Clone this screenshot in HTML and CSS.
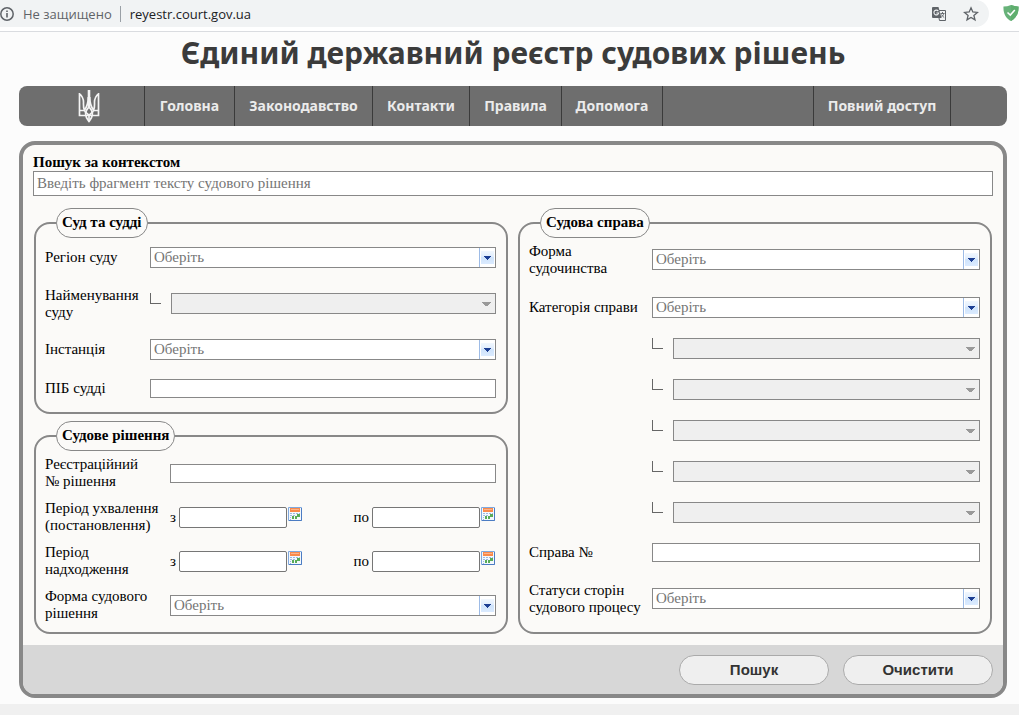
FILE: index.html
```html
<!DOCTYPE html>
<html lang="uk">
<head>
<meta charset="utf-8">
<title>Єдиний державний реєстр судових рішень</title>
<link rel="stylesheet" href="styles.css">
</head>
<body>
<svg width="0" height="0" class="defs" aria-hidden="true">
  <defs>
    <linearGradient id="btn" x1="0" y1="0" x2="0" y2="1"><stop offset="0" stop-color="#f1f7fe"/><stop offset=".45" stop-color="#e0edfd"/><stop offset=".5" stop-color="#cfe3fb"/><stop offset="1" stop-color="#dbebff"/></linearGradient>
    <symbol id="arrow" viewBox="0 0 17 19"><path d="M1.500 0v19" stroke="#9dbbe6"/><path d="M3 3h13v13H3z" fill="url(#btn)"/><path d="M6 8h7v1h-1v1h-1v1h-1v1H9v-1H8v-1H7V9H6z" fill="#1d3f94"/></symbol>
    <symbol id="arrow-off" viewBox="0 0 17 19"><path d="M4 8h9v1h-1v1h-1v1h-1v1H7v-1H6v-1H5V9H4z" fill="#999"/></symbol>
    <symbol id="calendar" viewBox="0 0 14 14"><path d="M.5.5h13v13H.5z" fill="#f3f8fd" stroke="#7fa8de"/><path d="M13.500 1v12.500H1" fill="none" stroke="#4c7cc3"/><path d="M2 1h10v4H2z" fill="#f98a4b"/><path d="M3 2h8v1H3z" fill="#fdb48a"/><path d="M2 6h2v1H2zm3 0h2v1H5zm3 0h2v1H8zm3 0h1v1h-1zM2 8h2v1H2zm3 0h2v1H5zM2 10h1v1H2zM2 12h1v1H2z" fill="#9db8e0"/><path d="M9 7h3v3H9zM4 9h2v3H4zM7 9h2v3H7z" fill="#58ab57"/></symbol>
  </defs>
</svg>

<header class="browser">
  <div class="omnibox">
    <svg class="info" viewBox="0 0 14 14"><circle cx="7" cy="7" r="6.200" fill="none" stroke="#5f6368" stroke-width="1.500"/><path d="M7 6v4.500M7 3.400v1.600" stroke="#5f6368" stroke-width="1.600"/></svg>
    <span class="insecure">Не защищено</span>
    <span class="url">reyestr.court.gov.ua</span>
    <svg class="translate" viewBox="0 0 16 16"><path d="M6.500 4.500h8v10h-6z" fill="#f1f3f4" stroke="#5f6368"/><path d="M2 1h5.500l3 11H2a1 1 0 0 1-1-1V2a1 1 0 0 1 1-1z" fill="#5f6368"/><path d="M7.300 5.100A2.400 2.400 0 1 0 7.700 7H5.400" fill="none" stroke="#f1f3f4" stroke-width="1.100"/><path d="M9.500 7.500h4M11.500 6v1.500M12.800 7.500c-.4 1.700-1.300 2.700-2.500 3.500M10.500 8.500c.5 1.300 1.500 2.200 2.700 3" fill="none" stroke="#5f6368" stroke-width=".9"/></svg>
    <svg class="star" viewBox="0 0 16 16"><path d="M8 1.800l1.800 4.200 4.600.4-3.500 3 1.100 4.500L8 11.500l-4 2.400 1.100-4.500-3.500-3L6.200 6z" fill="none" stroke="#5f6368" stroke-width="1.300"/></svg>
  </div>
  <svg class="shield" viewBox="0 0 16 16"><path d="M8 0c2.500 1 5 1.500 7.500 1.500C16 9 12.500 13.500 8 16 3.500 13.500 0 9 .5 1.500 3 1.500 5.500 1 8 0z" fill="#67b279"/><path d="M8 0c2.500 1 5 1.500 7.500 1.500C16 9 12.500 13.500 8 16z" fill="#5fae6e"/><path d="M4.500 7.500L7.300 10l4.500-5" fill="none" stroke="#fff" stroke-width="1.600"/></svg>
</header>

<main class="page">
  <h1 class="title">Єдиний державний реєстр судових рішень</h1>
  <nav class="menu">
    <span class="cell emblem"><svg viewBox="0 0 22 34" fill="none" stroke="#f4f4f4" stroke-width="1.700"><path d="M1.500 4v22.500H8M20.500 4v22.500H14M1.500 4.500C4 7 5.500 9.500 5.500 13c0 3-.5 5.500 1 8M20.500 4.500C18 7 16.500 9.500 16.500 13c0 3 .5 5.500-1 8"/><path d="M11 1v17" stroke-width="2.600"/><path d="M10.300 8c0 7-1.500 10-4 13.500M11.700 8c0 7 1.500 10 4 13.500"/><path d="M1.500 21.500h4c2 0 2.200 2 2.200 4 0 3 1.300 4.500 3.300 7 2-2.500 3.300-4 3.300-7 0-2 .2-4 2.200-4h4"/><path d="M11 18c-1.500 2-3 3-3 5 0 1.500 3 2 3 4 0-2 3-2.500 3-4 0-2-1.500-3-3-5zM7.500 26.500h7M11 25v7"/></svg></span>
    <a class="cell" href="#">Головна</a>
    <a class="cell" href="#">Законодавство</a>
    <a class="cell" href="#">Контакти</a>
    <a class="cell" href="#">Правила</a>
    <a class="cell" href="#">Допомога</a>
    <span class="cell"></span>
    <a class="cell" href="#">Повний доступ</a>
  </nav>

  <form class="panel">
    <div class="context">
      <label for="ctx">Пошук за контекстом</label>
      <input id="ctx" class="text large" type="text" placeholder="Введіть фрагмент тексту судового рішення">
    </div>
    <div class="columns">
      <div class="column">
        <fieldset class="group court">
          <legend>Суд та судді</legend>
          <div class="row"><label for="region">Регіон суду</label><div class="combo"><select id="region"><option>Оберіть</option></select><svg><use href="#arrow"/></svg></div></div>
          <div class="row tall"><label for="court">Найменування суду</label><div class="sub"><i class="branch"></i><div class="combo"><select id="court" disabled></select><svg><use href="#arrow-off"/></svg></div></div></div>
          <div class="row"><label for="inst">Інстанція</label><div class="combo"><select id="inst"><option>Оберіть</option></select><svg><use href="#arrow"/></svg></div></div>
          <div class="row"><label for="judge">ПІБ судді</label><input id="judge" class="text" type="text"></div>
        </fieldset>
        <fieldset class="group decision">
          <legend>Судове рішення</legend>
          <div class="row"><label for="reg">Реєстраційний<br>№ рішення</label><input id="reg" class="text" type="text"></div>
          <div class="row"><span>Період ухвалення (постановлення)</span>
            <div class="dates">
              <div class="date"><label for="a1">з</label><input id="a1" type="text"><button type="button" aria-label="Календар"><svg><use href="#calendar"/></svg></button></div>
              <div class="date"><label for="a2">по</label><input id="a2" type="text"><button type="button" aria-label="Календар"><svg><use href="#calendar"/></svg></button></div>
            </div></div>
          <div class="row"><span>Період<br>надходження</span>
            <div class="dates">
              <div class="date"><label for="b1">з</label><input id="b1" type="text"><button type="button" aria-label="Календар"><svg><use href="#calendar"/></svg></button></div>
              <div class="date"><label for="b2">по</label><input id="b2" type="text"><button type="button" aria-label="Календар"><svg><use href="#calendar"/></svg></button></div>
            </div></div>
          <div class="row"><label for="form">Форма судового рішення</label><div class="combo"><select id="form"><option>Оберіть</option></select><svg><use href="#arrow"/></svg></div></div>
        </fieldset>
      </div>
      <div class="column">
        <fieldset class="group case">
          <legend>Судова справа</legend>
          <div class="row first"><label for="kind">Форма<br>судочинства</label><div class="combo"><select id="kind"><option>Оберіть</option></select><svg><use href="#arrow"/></svg></div></div>
          <div class="row"><label for="cat">Категорія справи</label><div class="combo"><select id="cat"><option>Оберіть</option></select><svg><use href="#arrow"/></svg></div></div>
          <div class="row"><span></span><div class="sub"><i class="branch"></i><div class="combo"><select aria-label="Категорія 2" disabled></select><svg><use href="#arrow-off"/></svg></div></div></div>
          <div class="row"><span></span><div class="sub"><i class="branch"></i><div class="combo"><select aria-label="Категорія 3" disabled></select><svg><use href="#arrow-off"/></svg></div></div></div>
          <div class="row"><span></span><div class="sub"><i class="branch"></i><div class="combo"><select aria-label="Категорія 4" disabled></select><svg><use href="#arrow-off"/></svg></div></div></div>
          <div class="row"><span></span><div class="sub"><i class="branch"></i><div class="combo"><select aria-label="Категорія 5" disabled></select><svg><use href="#arrow-off"/></svg></div></div></div>
          <div class="row"><span></span><div class="sub"><i class="branch"></i><div class="combo"><select aria-label="Категорія 6" disabled></select><svg><use href="#arrow-off"/></svg></div></div></div>
          <div class="row short"><label for="num">Справа №</label><input id="num" class="text" type="text"></div>
          <div class="row tall"><label for="status">Статуси сторін судового процесу</label><div class="combo"><select id="status"><option>Оберіть</option></select><svg><use href="#arrow"/></svg></div></div>
        </fieldset>
      </div>
    </div>
    <div class="actions">
      <button class="action" type="button">Пошук</button>
      <button class="action" type="reset">Очистити</button>
    </div>
  </form>
</main>
</body>
</html>
```
FILE: styles.css
```css
* { box-sizing: border-box; }
html { background: #f0f0f0; overflow: hidden; }
body { margin: 0; font: 15px/17px "Liberation Serif", "Times New Roman", serif; color: #000; }
svg { display: block; flex: none; }
.defs { position: absolute; }

.browser { display: flex; height: 32px; background: #fff; border-bottom: 1px solid #dadce0; overflow: hidden; }
.omnibox { display: flex; flex: 1; align-items: center; height: 27px; padding-right: 10px; background: #f1f3f4; border-radius: 0 14px 14px 0; font: 13px/20px "Open Sans", "Noto Sans", sans-serif; color: #202124; }
.info { width: 14px; height: 14px; }
.insecure { margin-left: 9px; padding-right: 8px; line-height: 16px; border-right: 1px solid #9aa0a6; color: #5f6368; }
.url { flex: 1; margin-left: 9px; }
.translate, .star { width: 16px; height: 16px; }
.star { margin-left: 16px; }
.shield { width: 16px; height: 16px; margin: 5px 0 0 14px; }

.page { padding: 0 12px 6px 19px; background: #fcfcfc; }
.title { margin: 0; height: 54px; font: bold 30px/41px "Noto Sans", sans-serif; color: #3b3b3b; text-align: center; white-space: nowrap; }

.menu { display: grid; grid-template-columns: 126px 90px 138px 97px 92px 101px 1fr 137px 56px; height: 40px; background: #6e6e6e; border-radius: 8px; font: bold 14px/40px "Noto Sans", sans-serif; }
.cell { border-right: 1px solid #3a3a3a; color: #ebebeb; text-align: center; text-decoration: none; white-space: nowrap; }
.emblem { padding: 3px 0 0 59px; }
.emblem svg { width: 22px; height: 34px; }

.panel { margin-top: 15px; border: 4px solid #888; border-radius: 16px; background: #fbfaf8; overflow: hidden; }
.context { padding: 9px 10px 12px; }
.context label { display: block; font-weight: bold; }
.text { display: block; width: 100%; height: 19px; padding: 0 3px; border: 1px solid #888; background: #fff; font: inherit; }
.large { height: 25px; }
.text::placeholder { color: #757575; opacity: 1; }

.columns { display: grid; grid-template-columns: 1fr 1fr; gap: 10px; padding: 0 11px 11px; }
.column { display: flex; flex-direction: column; gap: 7px; }
.group { min-width: 0; margin: 0; padding: 0 10px 4px 9px; border: 2px solid #888; border-radius: 16px; }
.group legend { height: 30px; margin-left: 11px; padding: 0 5px; border: 1px solid #888; border-radius: 15px; font-weight: bold; line-height: 27px; }
.row { display: grid; align-items: center; }
.court .row { grid-template-columns: 105px minmax(0, 1fr); min-height: 39px; }
.court .tall { min-height: 53px; }
.decision { padding-bottom: 5px; }
.decision .row { grid-template-columns: 125px minmax(0, 1fr); min-height: 44px; }
.case { flex: 1; }
.case .row { grid-template-columns: 123px minmax(0, 1fr); min-height: 41px; }
.case .first { min-height: 43px; margin-bottom: 6px; }
.case .short { min-height: 39px; }
.case .tall { min-height: 53px; }

.combo { position: relative; flex: 1; }
.combo select { display: block; width: 100%; height: 21px; padding: 0 20px 0 3px; appearance: none; border: 1px solid #888; border-radius: 0; background: #fff; color: #757575; font: inherit; opacity: 1; }
.combo select:disabled { background: #efefef; border-color: #888; }
.combo svg { position: absolute; top: 1px; right: 1px; width: 17px; height: 19px; pointer-events: none; }
.sub { display: flex; gap: 10px; }
.branch { width: 11px; height: 11px; border: solid #666; border-width: 0 0 1px 1px; }

.dates { display: flex; justify-content: space-between; padding-right: 1px; }
.date { display: flex; gap: 3px; line-height: 21px; }
.date input { width: 108px; height: 21px; padding: 0 3px; border: 1px solid #767676; border-radius: 2px; background: #fff; font: inherit; }
.date button { margin-left: -2px; width: 14px; height: 14px; padding: 0; border: 0; background: none; }
.date svg { width: 14px; height: 14px; }

.actions { display: flex; justify-content: flex-end; gap: 14px; padding: 10px 10px 9px; background: #d7d7d7; }
.action { width: 150px; height: 30px; border: 1px solid #aaa; border-radius: 15px; background: #efefef; font: bold 15px/18px "Liberation Sans", Arial, sans-serif; color: #333; }
```
